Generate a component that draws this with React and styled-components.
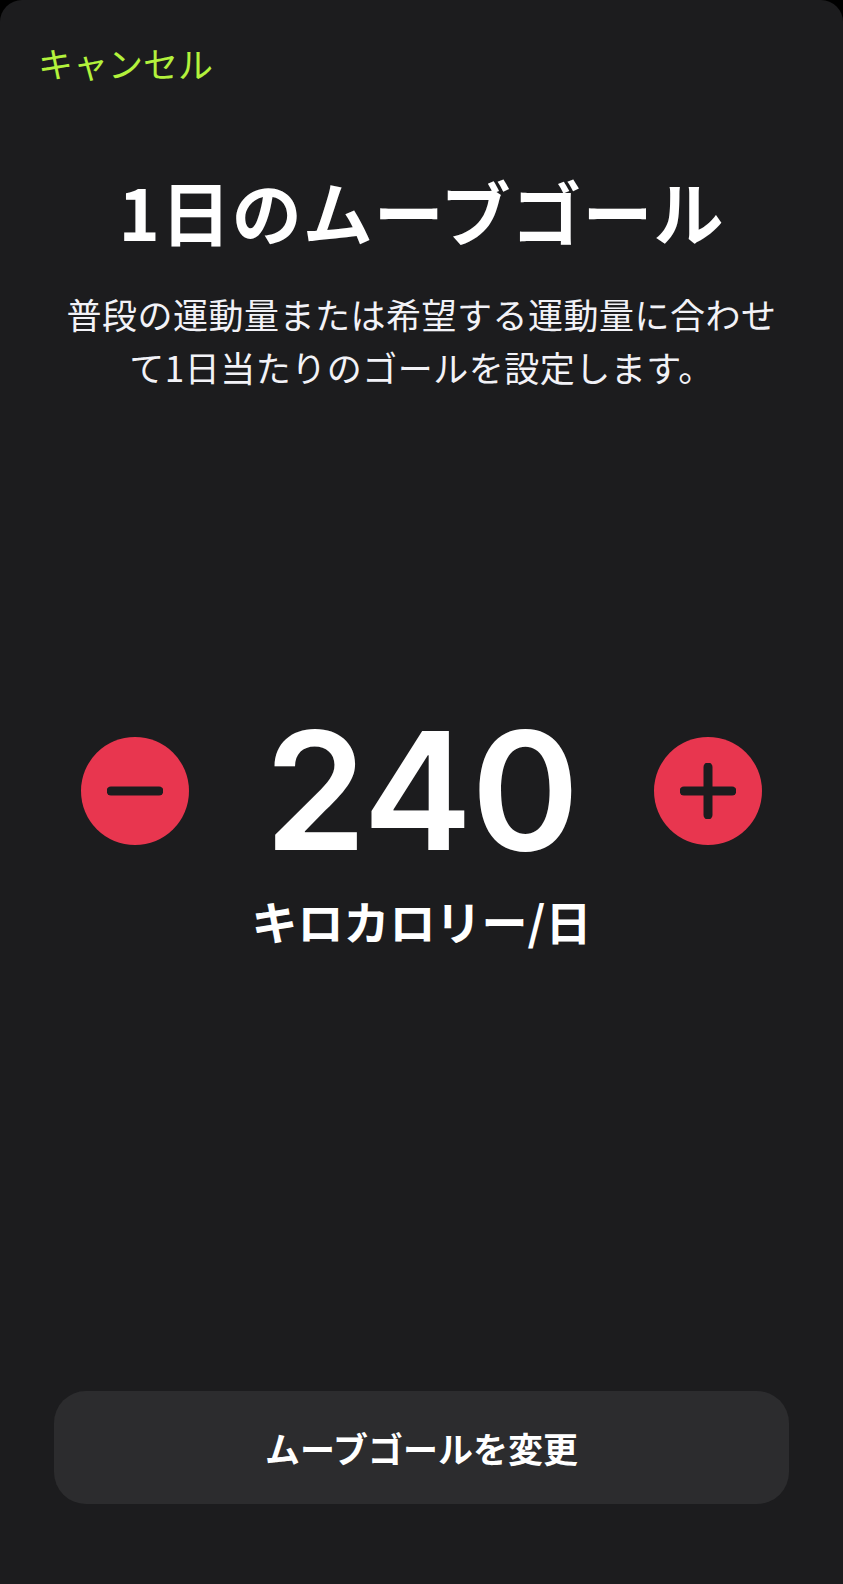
import React from "react";
import styled, { createGlobalStyle } from "styled-components";

const GlobalStyle = createGlobalStyle`
  html, body {
    margin: 0;
    padding: 0;
    background: #000;
  }
  * { box-sizing: border-box; }
`;

const FONT = `"Noto Sans CJK JP", "Noto Sans", sans-serif`;

const Sheet = styled.div`
  min-height: 1584px;
  background: #1c1c1e;
  border-radius: 22px 22px 0 0;
  display: flex;
  flex-direction: column;
  font-family: ${FONT};
  color: #fff;
`;

const Header = styled.div`
  display: flex;
  padding: 42px 38px 0;
`;

const CancelButton = styled.button`
  background: none;
  border: none;
  padding: 0;
  font-family: ${FONT};
  font-size: 35px;
  line-height: 41px;
  font-weight: 400;
  color: #b3f23c;
  cursor: pointer;
`;

const Title = styled.h1`
  margin: 86px 0 0;
  text-align: center;
  font-size: 70px;
  line-height: 84px;
  font-weight: 700;
  letter-spacing: 1px;
`;

const Description = styled.p`
  margin: 34px auto 0;
  width: 720px;
  text-align: center;
  font-size: 35px;
  line-height: 53px;
  font-weight: 400;
  letter-spacing: 0.5px;
  color: #f2f2f7;
`;

const StepperRow = styled.div`
  margin-top: 316px;
  display: flex;
  align-items: center;
  justify-content: space-between;
  padding: 0 81px;
`;

const RoundButton = styled.button`
  width: 108px;
  height: 108px;
  border-radius: 50%;
  border: none;
  padding: 0;
  background: #e8364f;
  display: flex;
  align-items: center;
  justify-content: center;
  cursor: pointer;
`;

const Value = styled.div`
  font-family: Inter, "Noto Sans", sans-serif;
  font-size: 164px;
  line-height: 164px;
  font-weight: 560;
  letter-spacing: -1px;
  color: #fff;
`;

const Unit = styled.div`
  margin-top: 20px;
  text-align: center;
  font-size: 46px;
  line-height: 54px;
  font-weight: 700;
`;

const Spacer = styled.div`
  flex: 1;
`;

const PrimaryButton = styled.button`
  margin: 0 54px 80px;
  height: 113px;
  border: none;
  border-radius: 32px;
  background: #2c2c2e;
  color: #fff;
  font-family: ${FONT};
  font-size: 35px;
  font-weight: 700;
  cursor: pointer;
`;

const Glyph = ({ plus }) => (
  <svg width="56" height="56" viewBox="0 0 56 56">
    <line x1="4" y1="28" x2="52" y2="28" stroke="#1c1c1e" strokeWidth="9" strokeLinecap="round" />
    {plus && (
      <line x1="28" y1="4" x2="28" y2="52" stroke="#1c1c1e" strokeWidth="9" strokeLinecap="round" />
    )}
  </svg>
);

export default function App() {
  return (
    <>
      <GlobalStyle />
      <Sheet>
        <Header>
          <CancelButton>キャンセル</CancelButton>
        </Header>
        <Title>1日のムーブゴール</Title>
        <Description>
          普段の運動量または希望する運動量に合わせて1日当たりのゴールを設定します。
        </Description>
        <StepperRow>
          <RoundButton aria-label="減らす">
            <Glyph />
          </RoundButton>
          <Value>240</Value>
          <RoundButton aria-label="増やす">
            <Glyph plus />
          </RoundButton>
        </StepperRow>
        <Unit>キロカロリー/日</Unit>
        <Spacer />
        <PrimaryButton>ムーブゴールを変更</PrimaryButton>
      </Sheet>
    </>
  );
}
